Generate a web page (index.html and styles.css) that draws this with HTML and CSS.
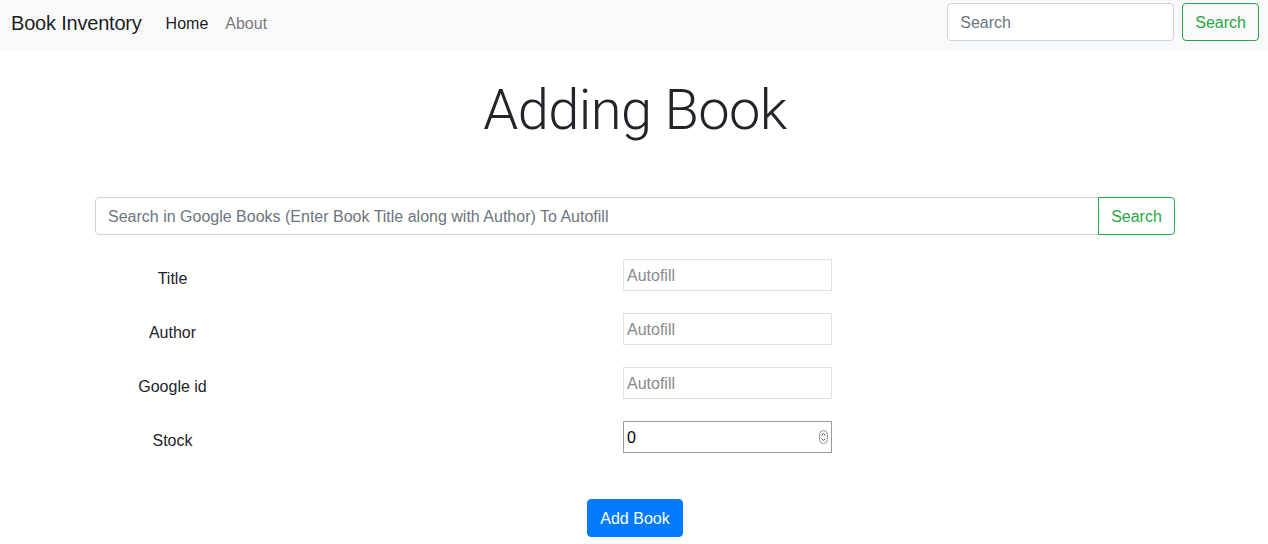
FILE: index.html
```html
<!DOCTYPE html>
<html lang="en">
<head>
<meta charset="utf-8">
<title>Book Inventory</title>
<link rel="stylesheet" href="styles.css">
</head>
<body>
<nav class="navbar">
  <a class="brand" href="#">Book Inventory</a>
  <ul class="nav">
    <li><a class="nav-link active" href="#">Home</a></li>
    <li><a class="nav-link" href="#">About</a></li>
  </ul>
  <form class="nav-search">
    <input class="form-control nav-input" type="search" placeholder="Search">
    <button class="btn btn-outline-success" type="button">Search</button>
  </form>
</nav>
<main class="container">
  <h1 class="display">Adding Book</h1>
  <div class="input-group">
    <input class="form-control group-input" type="text" placeholder="Search in Google Books (Enter Book Title along with Author) To Autofill">
    <button class="btn btn-outline-success group-btn" type="button">Search</button>
  </div>
  <div class="fields">
    <div class="field-row">
      <label class="field-label">Title</label>
      <input class="plain-input" type="text" placeholder="Autofill" readonly>
    </div>
    <div class="field-row">
      <label class="field-label">Author</label>
      <input class="plain-input" type="text" placeholder="Autofill" readonly>
    </div>
    <div class="field-row">
      <label class="field-label">Google id</label>
      <input class="plain-input" type="text" placeholder="Autofill" readonly>
    </div>
    <div class="field-row">
      <label class="field-label">Stock</label>
      <div class="number-wrap">
        <input class="plain-input number-input" type="number" value="0">
        <svg class="spinner" width="9" height="14" viewBox="0 0 9 14" aria-hidden="true">
          <rect x="0.5" y="0.5" width="8" height="13" rx="4" ry="4" fill="#fafafa" stroke="#9a9a9a" stroke-width="1"/>
          <path d="M2.6 5.4 L4.5 3.6 L6.4 5.4" fill="none" stroke="#555" stroke-width="1"/>
          <path d="M2.6 8.6 L4.5 10.4 L6.4 8.6" fill="none" stroke="#555" stroke-width="1"/>
        </svg>
      </div>
    </div>
  </div>
  <div class="actions">
    <button class="btn btn-primary" type="button">Add Book</button>
  </div>
</main>
</body>
</html>
```

FILE: styles.css
```css
* { box-sizing: border-box; }

html, body {
  margin: 0;
  padding: 0;
}

body {
  font-family: "Liberation Sans", Arial, sans-serif;
  font-size: 16px;
  line-height: 1.5;
  color: #212529;
  background: #fff;
}

.navbar {
  display: flex;
  align-items: center;
  height: 50px;
  padding: 3px 10px 9px 11px;
  background: #f8f9fa;
}

.brand {
  font-size: 20px;
  line-height: 30px;
  padding-top: 2px;
  letter-spacing: -0.2px;
  color: rgba(0, 0, 0, 0.9);
  text-decoration: none;
  margin-right: 16px;
  white-space: nowrap;
}

.nav {
  display: flex;
  list-style: none;
  margin: 0;
  padding: 0;
  flex: 1;
}

.nav-link {
  display: block;
  padding: 10px 8px 6px;
  color: rgba(0, 0, 0, 0.55);
  text-decoration: none;
}

.nav-link.active {
  color: rgba(0, 0, 0, 0.9);
  margin-right: 1px;
}

.nav-search {
  display: flex;
  align-items: center;
}

.form-control {
  height: 38px;
  padding: 7px 12px 5px;
  font-family: inherit;
  font-size: 16px;
  color: #495057;
  background: #fff;
  border: 1px solid #ced4da;
  border-radius: 4px;
  outline: none;
}

.form-control::placeholder {
  color: #6c757d;
  opacity: 1;
}

.nav-input {
  width: 227px;
  margin-right: 8px;
}

.btn {
  display: inline-block;
  height: 38px;
  padding: 7px 12px 5px;
  font-family: inherit;
  font-size: 16px;
  line-height: 24px;
  border: 1px solid transparent;
  border-radius: 4px;
  background: transparent;
  cursor: pointer;
}

.btn-outline-success {
  color: #28a745;
  border-color: #28a745;
}

.nav-search .btn {
  margin-right: -1px;
}

.btn-primary {
  color: #fff;
  background: #007bff;
  border-color: #007bff;
}

.container {
  width: 1080px;
  margin: 0 auto;
  padding-top: 27px;
  position: relative;
  left: 1px;
}

.display {
  margin: 0 0 53px;
  font-family: Roboto, "Liberation Sans", sans-serif;
  font-size: 56px;
  font-weight: 300;
  line-height: 67px;
  letter-spacing: -0.6px;
  text-align: center;
}

.input-group {
  display: flex;
}

.group-input {
  flex: 1;
  border-top-right-radius: 0;
  border-bottom-right-radius: 0;
}

.group-btn {
  width: 77px;
  border-top-left-radius: 0;
  border-bottom-left-radius: 0;
  margin-left: -1px;
}

.fields {
  display: flex;
  flex-direction: column;
  gap: 22px;
  margin-top: 24px;
}

.field-row {
  display: grid;
  grid-template-columns: 155px 1fr;
  align-items: center;
  height: 32px;
}

.field-label {
  text-align: center;
  padding-top: 8px;
  color: #212529;
}

.plain-input {
  justify-self: start;
  margin-left: 373px;
  width: 209px;
  height: 32px;
  padding: 1px 3px 0;
  font-family: "Liberation Sans", Arial, sans-serif;
  font-size: 16px;
  color: #000;
  background: #fff;
  border: 1px solid #e1e1e1;
  border-radius: 0;
  outline: none;
}

.plain-input::placeholder {
  color: #8a8a8a;
  opacity: 1;
}

.number-wrap {
  position: relative;
  justify-self: start;
  margin-left: 373px;
  width: 209px;
  height: 32px;
}

.number-wrap .number-input {
  margin-left: 0;
  width: 100%;
  border-color: #9b9b9b;
  -moz-appearance: textfield;
}

.number-input::-webkit-inner-spin-button,
.number-input::-webkit-outer-spin-button {
  -webkit-appearance: none;
  margin: 0;
}

.spinner {
  position: absolute;
  right: 4px;
  top: 9px;
}

.actions {
  display: flex;
  justify-content: center;
  margin-top: 46px;
}

.actions .btn {
  width: 96px;
  padding: 7px 0 5px;
}
```
